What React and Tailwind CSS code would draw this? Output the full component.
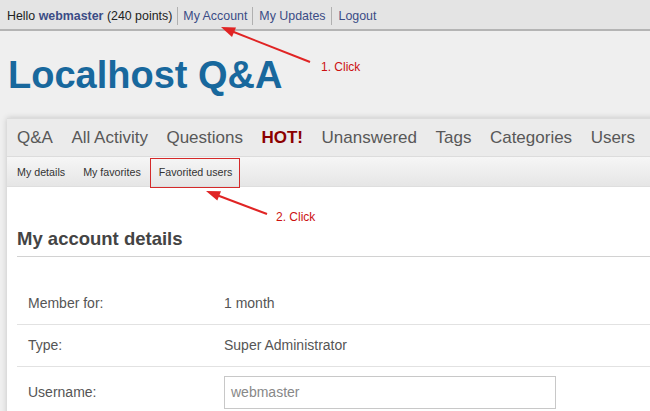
import React from 'react';

const font = { fontFamily: '"Liberation Sans", Arial, sans-serif' };

export default function App() {
  const navItems = ['Q&A', 'All Activity', 'Questions', 'HOT!', 'Unanswered', 'Tags', 'Categories', 'Users'];

  return (
    <div className="relative w-[650px] h-[411px] overflow-hidden bg-[#efefef]" style={font}>
      {/* top user bar */}
      <div className="h-[31px] pt-[3px] bg-[#e4e4e4] border-b-2 border-[#b4b4b4] flex items-center pl-[7px] text-[12.4px] text-[#222]">
        <span>Hello <b className="text-[#3b4c86]">webmaster</b> (240 points)</span>
        <span className="ml-[5px] h-[18px] border-l border-[#b0b0b0]"></span>
        <span className="px-[5px] text-[#3b4c86]">My Account</span>
        <span className="h-[18px] border-l border-[#b0b0b0]"></span>
        <span className="px-[6px] text-[#3b4c86]">My Updates</span>
        <span className="h-[18px] border-l border-[#b0b0b0]"></span>
        <span className="px-[6px] text-[#3b4c86]">Logout</span>
      </div>

      {/* site title */}
      <h1 className="mt-[25px] ml-[8px] text-[38px] leading-none font-bold text-[#18689d]">Localhost Q&amp;A</h1>

      {/* main panel */}
      <div className="mt-[24px] ml-[7px] w-[700px] bg-white shadow-[0_0_6px_rgba(0,0,0,0.18)]">
        <div className="h-[39px] bg-[#ebebeb] border-t border-[#dcdcdc] border-b border-[#d4d4d4] flex items-center pl-[10px] gap-[18.5px] text-[17px] text-[#585858]">
          {navItems.map((n) => (
            <span key={n} className={n === 'HOT!' ? 'font-bold text-[#8b0000]' : ''}>{n}</span>
          ))}
        </div>
        <div className="h-[30px] pt-[1px] bg-gradient-to-b from-[#f6f6f6] to-[#e6e6e6] border-b border-[#dedede] flex items-stretch pl-[1px] text-[10.7px] text-[#333]">
          <span className="px-[9px] flex items-center">My details</span>
          <span className="px-[9px] flex items-center">My favorites</span>
          <span className="relative pl-[9px] pr-[8px] flex items-center">
            Favorited users
            <span className="absolute left-0 right-0 top-0 -bottom-[2px] border border-[#d42a2a]"></span>
          </span>
        </div>

        <div className="pl-[10px] pt-[43px] pb-[20px]">
          <h2 className="text-[18.5px] leading-none font-bold text-[#444] pb-[7px] border-b border-[#d2d2d2]">My account details</h2>
          <div className="mt-[26px] text-[14px] text-[#555]">
            <div className="h-[42px] flex items-center border-b border-[#e2e2e2]">
              <span className="w-[207px] pl-[11px]">Member for:</span>
              <span>1 month</span>
            </div>
            <div className="h-[42px] flex items-center border-b border-[#e2e2e2]">
              <span className="w-[207px] pl-[11px]">Type:</span>
              <span>Super Administrator</span>
            </div>
            <div className="h-[51px] flex items-center">
              <span className="w-[207px] pl-[11px]">Username:</span>
              <div className="w-[332px] h-[33px] border border-[#c8c8c8] bg-white flex items-center pl-[6px] text-[#888]">webmaster</div>
            </div>
          </div>
        </div>
      </div>

      {/* annotation arrows */}
      <svg className="absolute inset-0 pointer-events-none" width="650" height="411">
        <line x1="310" y1="62" x2="230" y2="30.5" stroke="#e02424" strokeWidth="2" />
        <polygon points="221,27 236,27.4 232,37" fill="#e02424" />
        <line x1="267" y1="214" x2="214" y2="194" stroke="#e02424" strokeWidth="2" />
        <polygon points="206,191 221,191.2 217.3,200.6" fill="#e02424" />
      </svg>
      <span className="absolute left-[321px] top-[61px] text-[12px] leading-none text-[#cc1111]">1. Click</span>
      <span className="absolute left-[276px] top-[211px] text-[12px] leading-none text-[#cc1111]">2. Click</span>
    </div>
  );
}
